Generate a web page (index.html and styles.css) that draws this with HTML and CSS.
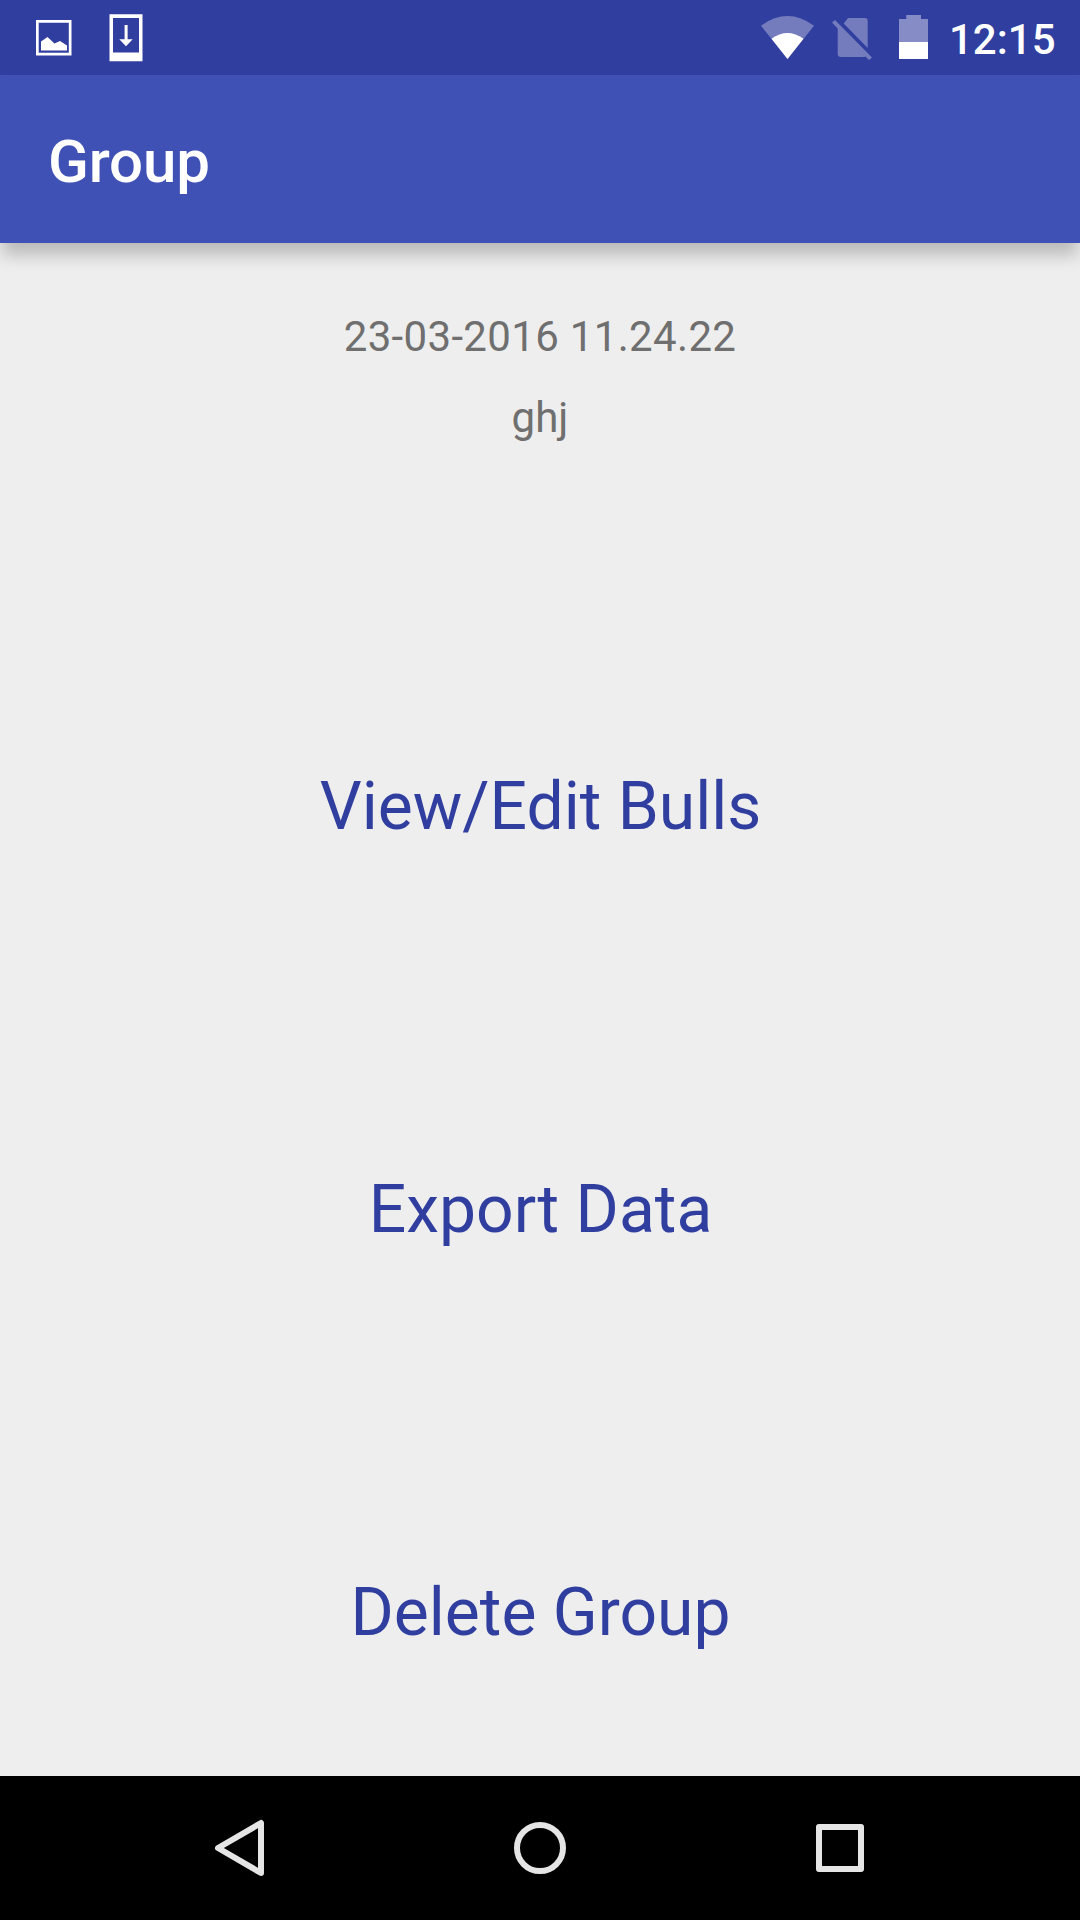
FILE: index.html
```html
<!DOCTYPE html>
<html lang="en">
<head>
<meta charset="utf-8">
<title>Group</title>
<link rel="stylesheet" href="styles.css">
</head>
<body>
<div class="status">
  <svg class="status-icons" width="150" height="75" viewBox="0 0 150 75">
    <path fill="#fff" fill-rule="evenodd" d="M36 20H71.500V55.500H36ZM38.700 22.700V52.800H68.800V22.700ZM41 50.500V41.500L47.500 37L54.500 43.500L60 41L67 45.500V50.500Z"/>
    <path fill="#fff" fill-rule="evenodd" d="M109.500 14.300H142.500V61.300H109.500ZM113 18V52.500H139V18Z"/>
    <path fill="#fff" d="M124.600 25H127.600V39.300H132.700L126 46.300L119.300 39.300H124.600Z"/>
  </svg>
  <svg class="status-icons" width="190" height="75" viewBox="750 0 190 75">
    <path fill="#747cbd" d="M761 25.700Q787.500 6.500 814 25.700L787.500 59Z"/>
    <path fill="#fff" d="M771.500 38.700Q787.500 27.500 803.500 38.700L787.500 59Z"/>
    <path fill="#747cbd" d="M848 18H865Q867.700 18 867.700 21V48L843.700 23.500ZM832 22.500L835 20L872 57.500L869 60L865.500 56.500Q864.500 57 863 57H841Q837.700 57 837.700 54V28.500Z"/>
    <path fill="#868dc6" d="M899 19H906.300V15H921V19H928V42.300H899Z"/>
    <path fill="#fff" d="M899 42H928V59H899Z"/>
  </svg>
  <span class="clock">12:15</span>
</div>
<header class="appbar"><h1 class="title">Group</h1></header>
<main class="content">
  <p class="info date">23-03-2016 11.24.22</p>
  <p class="info">ghj</p>
  <div class="actions">
    <button class="action">View/Edit Bulls</button>
    <button class="action">Export Data</button>
    <button class="action">Delete Group</button>
  </div>
</main>
<nav class="navbar">
  <svg width="1080" height="144" viewBox="0 1776 1080 144" fill="none" stroke="#e5e5e5" stroke-width="6" stroke-linejoin="round">
    <path d="M261 1823V1873L218 1848Z"/>
    <circle cx="540" cy="1848" r="23"/>
    <rect x="819" y="1827" width="42" height="42"/>
  </svg>
</nav>
</body>
</html>
```
FILE: styles.css
```css
body { margin: 0; width: 1080px; height: 1920px; display: flex; flex-direction: column; background: #eee; font-family: Roboto, sans-serif; }
.status { height: 75px; flex: none; display: flex; align-items: center; background: #303f9f; }
.status-icons { flex: none; }
.status-icons + .status-icons { margin-left: 600px; }
.clock { margin-left: 9px; padding-top: 4px; color: #fff; font-size: 42px; font-weight: 500; line-height: 50px; }
.appbar { height: 168px; flex: none; display: flex; align-items: center; padding: 5px 48px 0; box-sizing: border-box; background: #3f51b5; box-shadow: 0 14px 16px -2px rgba(0,0,0,.22); position: relative; }
.title { margin: 0; color: #fff; font-size: 60px; font-weight: 500; line-height: 70px; letter-spacing: -.15px; }
.content { flex: 1; min-height: 0; display: flex; flex-direction: column; align-items: center; padding-top: 68px; }
.info { margin: 0 0 30px; font-size: 42px; line-height: 51px; color: #6f6f6f; }
.date { letter-spacing: .33px; }
.actions { display: flex; flex-direction: column; align-items: center; gap: 325px; margin-top: 295px; padding-left: 1px; }
.action { border: 0; padding: 0; background: none; font: 400 66px/78px Roboto, sans-serif; color: #303f9f; }
.navbar { height: 144px; flex: none; background: #000; }
.navbar svg { display: block; }
```
